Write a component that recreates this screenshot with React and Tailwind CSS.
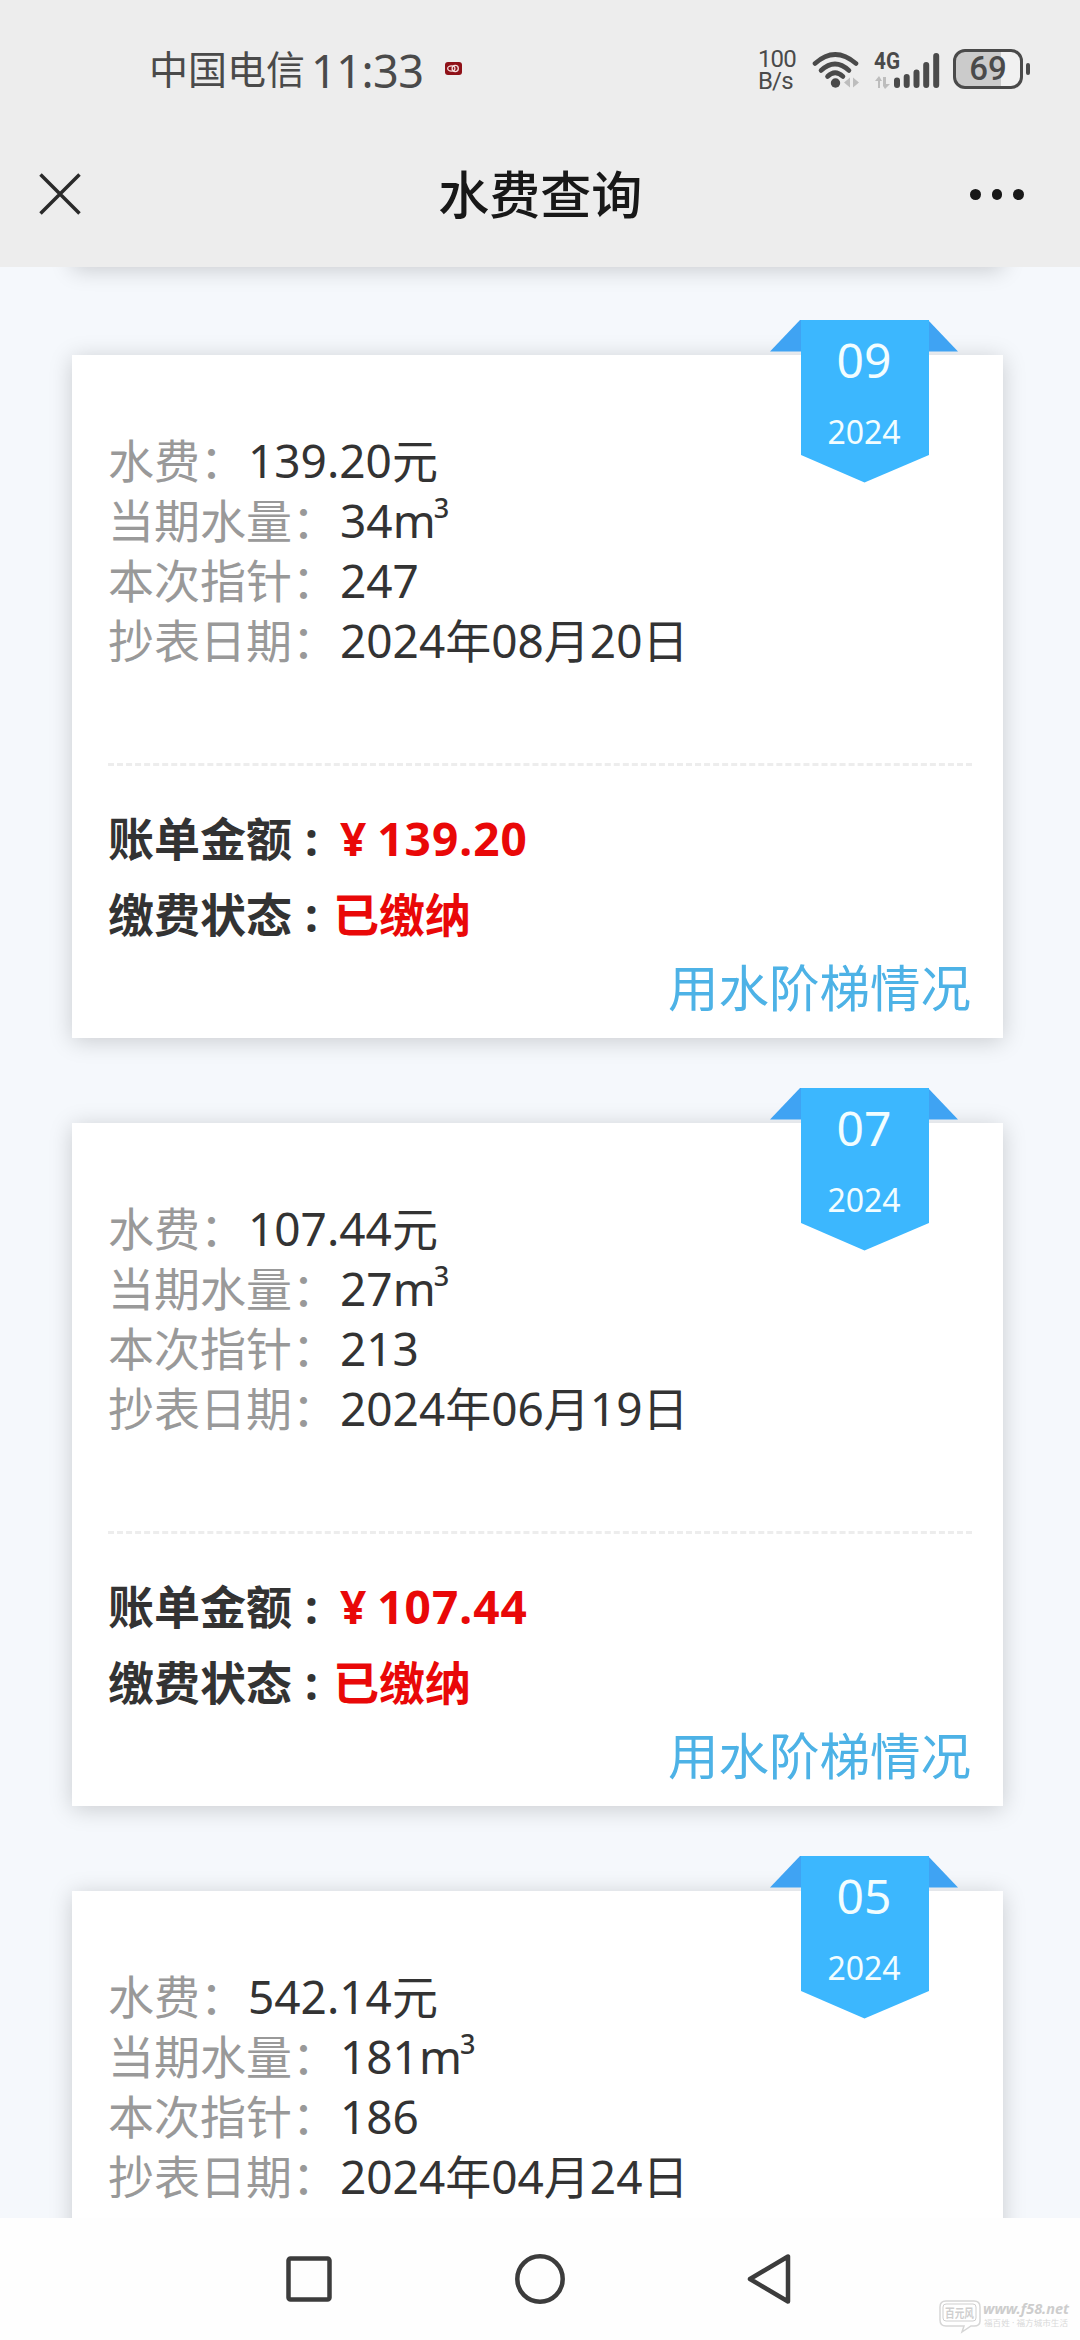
const bills = [
  { month: "09", year: "2024", fee: "139.20", usage: "34", pointer: "247", date: "2024年08月20日" },
  { month: "07", year: "2024", fee: "107.44", usage: "27", pointer: "213", date: "2024年06月19日" },
  { month: "05", year: "2024", fee: "542.14", usage: "181", pointer: "186", date: "2024年04月24日" },
];

function StatusBar() {
  return (
    <div className="flex h-[140px] items-center pl-[149px] pr-[50px] text-[#4a4a4a]">
      <span className="mb-[3px] text-[39px] leading-[46px]">中国电信</span>
      <span className="ml-[6px] text-[45px] leading-none tracking-[-0.5px]">11:33</span>
      <svg className="ml-[21px] mb-1" width="17" height="13" viewBox="0 0 17 13">
        <rect width="17" height="13" rx="3" fill="#8f1118" />
        <g fill="none" stroke="#f3dcdc" strokeWidth="1.3">
          <ellipse cx="6.3" cy="6.5" rx="3.6" ry="2.6" />
          <circle cx="10.2" cy="6.5" r="3.1" />
        </g>
      </svg>

      <div className="ml-auto flex items-center">
        <div className="font-[Roboto] text-[24px] leading-[22px] tracking-[-0.8px]">
          <div>100</div>
          <div>B/s</div>
        </div>
        <svg className="ml-[16px]" width="48" height="40" viewBox="0 0 48 40">
          <g fill="none" stroke="#4a4a4a" strokeWidth="4.6" strokeLinecap="round">
            <path d="M3 13.5Q23 -4.500 44 13.500" />
            <path d="M9 20.500Q23 7.500 37 20.500" />
            <path d="M15.500 26.500Q23 19 31 26.500" />
          </g>
          <circle cx="23.500" cy="33" r="4.700" fill="#4a4a4a" />
          <path d="M32 32.500l6-5v10zM41 27.500v10l6-5z" fill="#bdbdbd" />
        </svg>
        <svg className="ml-[14px] overflow-visible" width="67" height="40" viewBox="0 0 67 40">
          <text x="0" y="19" fontSize="24" fontWeight="700" textLength="26" lengthAdjust="spacingAndGlyphs" fill="#4a4a4a" fontFamily="Roboto, sans-serif">4G</text>
          <path d="M1 31l4-5 3 5H6v7H4v-7zM9 27h3v7h4l-5 5-2-3z" fill="#bdbdbd" />
          <g stroke="#4a4a4a" strokeWidth="6" strokeLinecap="round">
            <path d="M23 30.500V35M32.700 27V35M42.500 22.500V35M52.200 15V35M62.200 6V35" />
          </g>
        </svg>
        <div className="ml-[12px] mb-[2px] flex items-center">
          <div className="flex h-[40px] w-[70px] items-center justify-center rounded-[12px] border-[3px] border-[#4a4a4a] bg-linear-to-r from-[#cbcbcb] from-70% to-[#f1f1f1] to-70% font-[Roboto] text-[33px] font-medium leading-[34px]">
            69
          </div>
          <div className="ml-[3px] h-[12px] w-[4px] rounded-full bg-[#4a4a4a]" />
        </div>
      </div>
    </div>
  );
}

function TitleBar() {
  return (
    <div className="flex h-[127px] items-start justify-between pl-[39px] pr-[56px] pt-[23px] text-[#181818]">
      <svg className="mt-[10px]" width="42" height="42" viewBox="0 0 42 42" fill="none" stroke="#2a2a2a" strokeWidth="3.500">
        <path d="M1.500 1.500L40.500 40.500M40.500 1.500L1.500 40.500" />
      </svg>
      <h1 className="ml-[29px] text-[51px] font-medium leading-[62px]">水费查询</h1>
      <div className="mt-[26px] flex gap-[11px]">
        <i className="size-[10.500px] rounded-full bg-[#181818]" />
        <i className="size-[10.500px] rounded-full bg-[#181818]" />
        <i className="size-[10.500px] rounded-full bg-[#181818]" />
      </div>
    </div>
  );
}

function Ribbon({ month, year }) {
  return (
    <div className="absolute -top-[35px] right-[45px] h-[163px] w-[188px]">
      <svg className="absolute inset-0" width="188" height="163" viewBox="0 0 188 163">
        <path d="M30 0H158L188 31.500H0z" fill="#3fa3f3" />
        <path d="M31 0H159V135L94.500 162.500L31 135z" fill="#3cb7fe" />
      </svg>
      <div className="relative flex flex-col items-center text-[#f2fdff]">
        <span className="mt-[10px] text-[48px] leading-[60px]">{month}</span>
        <span className="mt-[22px] text-[32px] leading-[40px]">{year}</span>
      </div>
    </div>
  );
}

function Row({ label, children }) {
  return (
    <p className="flex h-[60px] leading-[60px] whitespace-nowrap">
      <span className="text-[#999]">{label}：</span>
      <span className="ml-[2px]">{children}</span>
    </p>
  );
}

function BillCard({ bill }) {
  return (
    <section className="relative h-[683px] w-[931px] shrink-0 bg-white px-[36px] pt-[75px] text-[46px] text-[#333] shadow-[0_3px_22px_rgba(0,0,0,0.18)]">
      <Ribbon month={bill.month} year={bill.year} />
      <Row label="水费">{bill.fee}元</Row>
      <Row label="当期水量">
        {bill.usage}m
        <sup className="relative -left-[2px] -top-[20px] align-baseline text-[27px] font-medium leading-none">3</sup>
      </Row>
      <Row label="本次指针">{bill.pointer}</Row>
      <Row label="抄表日期">{bill.date}</Row>
      <div className="mt-[93px] border-t-[3px] border-dashed border-[#ededed] -mr-[5px]" />
      <div className="mt-[34px] font-bold">
        <p className="flex h-[76px] leading-[76px]">
          <span className="w-[232px]">账单金额<span className="ml-[13px]">:</span></span>
          <span className="text-[#e90808]">¥</span>
          <span className="ml-[11px] tracking-[1px] text-[#e90808]">{bill.fee}</span>
        </p>
        <p className="flex h-[76px] leading-[76px]">
          <span className="w-[225px]">缴费状态<span className="ml-[13px]">:</span></span>
          <span className="text-[#e90808]">已缴纳</span>
        </p>
      </div>
      <a className="mt-[1px] -mr-[4px] block text-right text-[50.500px] leading-[70px] text-[#4db2e6]">用水阶梯情况</a>
    </section>
  );
}

function NavBar() {
  return (
    <nav className="relative flex h-[122px] items-start bg-[#fefefe]">
      <svg className="mt-[33px] ml-[284px]" width="510" height="56" viewBox="0 0 510 56" fill="none" stroke="#3c3c3c" strokeWidth="4.500" strokeLinejoin="round">
        <rect x="4.500" y="7.500" width="41" height="41" rx="2" />
        <circle cx="256" cy="28" r="22.700" />
        <path d="M504 5.500V50.500L466 28z" />
      </svg>
      {/* site mark in the corner */}
      <svg className="absolute right-0 bottom-0" width="150" height="50" viewBox="0 0 150 50">
        <path d="M16 11h28q6 0 6 6v14q0 5-6 5h-3l-9 6 2-6H16q-6 0-6-6V17q0-6 6-6z" fill="#fff" stroke="#d6d6d6" strokeWidth="1.500" />
        <rect x="13" y="14" width="33" height="17" rx="3" fill="none" stroke="#cfcfcf" />
        <text x="15" y="28" fontSize="12" fontWeight="700" textLength="29" lengthAdjust="spacingAndGlyphs" fill="#cfcfcf">百元风</text>
        <text x="53" y="24" fontSize="14" fontWeight="700" fontStyle="italic" textLength="86" lengthAdjust="spacingAndGlyphs" fill="#cdcdcd">www.f58.net</text>
        <text x="54" y="36" fontSize="8" textLength="84" lengthAdjust="spacingAndGlyphs" fill="#d9d9d9">福百姓 · 福方城市生活</text>
      </svg>
    </nav>
  );
}

export default function App() {
  return (
    <div className="flex h-[2340px] w-[1080px] flex-col overflow-hidden font-['Noto_Sans','Noto_Sans_CJK_SC',sans-serif]">
      <header className="bg-[#ededed]">
        <StatusBar />
        <TitleBar />
      </header>
      <main className="flex flex-1 flex-col items-center gap-[85px] overflow-hidden bg-[#f5f8fc] pr-[5px]">
        {/* tail of the card scrolled above */}
        <div className="-mt-[40px] mb-[3px] h-[40px] w-[931px] shrink-0 bg-white shadow-[0_3px_22px_rgba(0,0,0,0.18)]" />
        {bills.map((bill) => (
          <BillCard key={bill.month} bill={bill} />
        ))}
      </main>
      <NavBar />
    </div>
  );
}
